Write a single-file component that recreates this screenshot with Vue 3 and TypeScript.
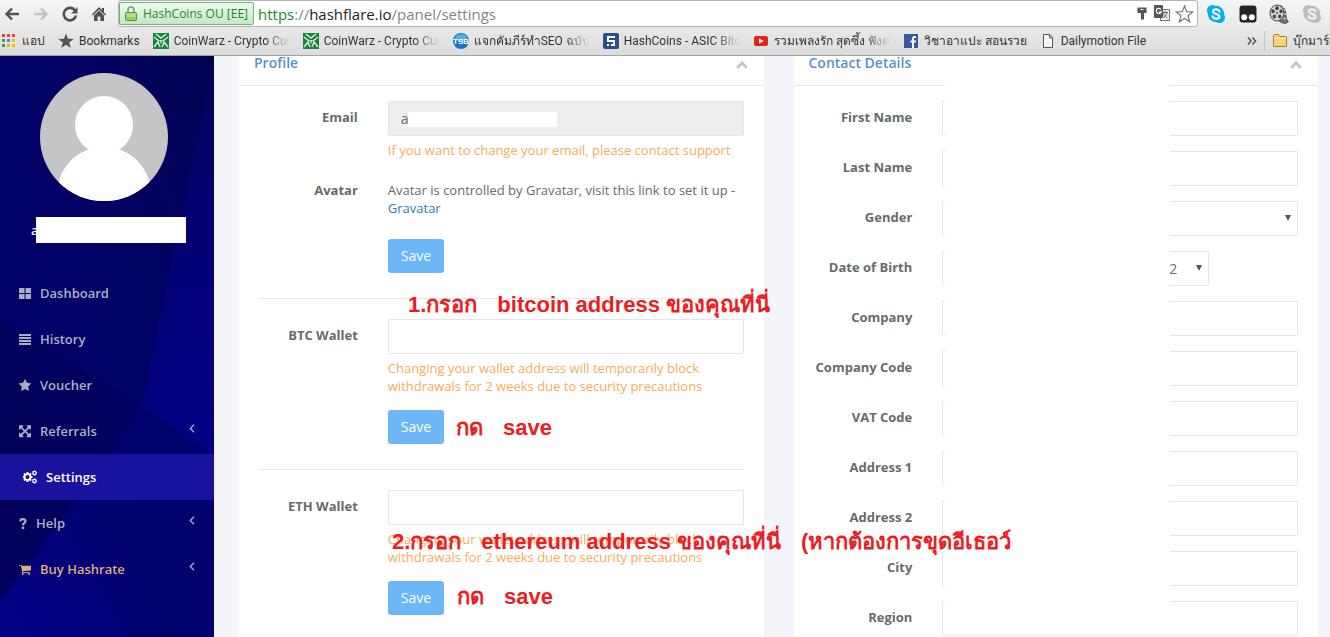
<script setup lang="ts">
import { ref } from 'vue'

interface Bookmark {
  label: string
  icon: string
  wide?: boolean
}

interface NavItem {
  label: string
  icon: string
  expandable?: boolean
  active?: boolean
  accent?: boolean
}

interface ContactField {
  id: string
  label: string
  kind: 'text' | 'select' | 'date'
}

const bookmarks: Bookmark[] = [
  { label: 'แอป', icon: 'apps' },
  { label: 'Bookmarks', icon: 'star' },
  { label: 'CoinWarz - Crypto Cur', icon: 'warz', wide: true },
  { label: 'CoinWarz - Crypto Cur', icon: 'warz', wide: true },
  { label: 'แจกคัมภีร์ทำSEO ฉบับเซี', icon: 'tsb', wide: true },
  { label: 'HashCoins - ASIC Bitco', icon: 'hashcoins', wide: true },
  { label: 'รวมเพลงรัก สุดซึ้ง ฟังต่อเนื่อง', icon: 'youtube', wide: true },
  { label: 'วิชาอาแปะ สอนรวย', icon: 'facebook' },
  { label: 'Dailymotion File', icon: 'file' },
]

const navItems: NavItem[] = [
  { label: 'Dashboard', icon: 'grid' },
  { label: 'History', icon: 'bars' },
  { label: 'Voucher', icon: 'star' },
  { label: 'Referrals', icon: 'arrows', expandable: true },
  { label: 'Settings', icon: 'cogs', active: true },
  { label: 'Help', icon: 'question', expandable: true },
  { label: 'Buy Hashrate', icon: 'cart', expandable: true, accent: true },
]

const contactFields: ContactField[] = [
  { id: 'first-name', label: 'First Name', kind: 'text' },
  { id: 'last-name', label: 'Last Name', kind: 'text' },
  { id: 'gender', label: 'Gender', kind: 'select' },
  { id: 'birth-year', label: 'Date of Birth', kind: 'date' },
  { id: 'company', label: 'Company', kind: 'text' },
  { id: 'company-code', label: 'Company Code', kind: 'text' },
  { id: 'vat-code', label: 'VAT Code', kind: 'text' },
  { id: 'address-1', label: 'Address 1', kind: 'text' },
  { id: 'address-2', label: 'Address 2', kind: 'text' },
  { id: 'city', label: 'City', kind: 'text' },
  { id: 'region', label: 'Region', kind: 'text' },
]

const wallets = [
  { id: 'btc', label: 'BTC Wallet' },
  { id: 'eth', label: 'ETH Wallet' },
]

const email = ref('a')
const addresses = ref<Record<string, string>>({ btc: '', eth: '' })
</script>

<template>
  <div class="window">
    <header class="browser">
      <div class="toolbar">
        <div class="controls">
          <button type="button" class="tool" aria-label="Back">
            <svg width="16" height="14" viewBox="0 0 16 14"><path d="M15 7H3M8 1.500 2.500 7 8 12.500" fill="none" stroke="#505050" stroke-width="2.400" /></svg>
          </button>
          <button type="button" class="tool" aria-label="Forward">
            <svg width="16" height="14" viewBox="0 0 16 14"><path d="M1 7h12M8 1.500 13.500 7 8 12.500" fill="none" stroke="#c4c4c4" stroke-width="2.400" /></svg>
          </button>
          <button type="button" class="tool" aria-label="Reload">
            <svg width="16" height="16" viewBox="0 0 16 16"><path d="M13 4.500A6.200 6.200 0 1 0 14 9.500" fill="none" stroke="#505050" stroke-width="2.600" /><path d="M15.500 1v6.500H9z" fill="#505050" /></svg>
          </button>
          <button type="button" class="tool" aria-label="Home">
            <svg width="16" height="16" viewBox="0 0 16 16"><path d="M8 1 .8 8.500l1.100 1L8 3.400l6.100 6.100 1.100-1-2.200-2.300V2h-2v2.100z" fill="#505050" /><path d="M8 4.600 3 9.600V15h3.600v-4.500h2.800V15H13V9.600z" fill="#505050" /></svg>
          </button>
        </div>
        <div class="omnibox">
          <button type="button" class="identity">
            <svg width="12" height="15" viewBox="0 0 12 15"><path d="M3 7V4a3 3 0 0 1 6 0v3" fill="none" stroke="#8c9484" stroke-width="1.600" /><rect x=".5" y="6.500" width="11" height="8" rx="1" fill="#8ed35c" stroke="#559438" /><path d="M1.500 8h9M1.500 10h9" stroke="#c9f0a7" /></svg>
            HashCoins OU [EE]
          </button>
          <div class="address"><span class="scheme">https</span><span class="path">://</span>hashflare.io<span class="path">/panel/settings</span></div>
          <div class="omni-icons">
            <svg width="12" height="16" viewBox="0 0 12 16"><path d="M1.500 1.500h9v5.500h-2.500v6.500H5V7H1.500z" fill="#555" /><path d="M4.500 3.500h3" stroke="#fff" /></svg>
            <svg width="17" height="17" viewBox="0 0 17 17"><rect x="7.500" y="4.500" width="9" height="11" fill="#eee" stroke="#777" /><path d="M9 7.500h6M12 6v1.500M14 8c-1 3-2.500 4-4 5M10 8c1 2 2.500 3.500 4.500 5" fill="none" stroke="#666" /><rect x="1" y="0" width="9" height="13" rx="1" fill="#555" /><path d="M8 4.500A2.600 2.600 0 1 0 8.200 7H6" fill="none" stroke="#fff" stroke-width="1.300" /></svg>
            <svg width="19" height="18" viewBox="0 0 19 18"><path d="m9.500 1 2.200 5.700 6.100.3-4.800 3.800 1.700 6-5.200-3.400L4.300 16.800l1.700-6L1.200 7l6.100-.3z" fill="#fff" stroke="#777" stroke-width="1.200" /></svg>
          </div>
        </div>
        <div class="extensions">
          <button type="button" class="tool" aria-label="Skype">
            <svg width="20" height="20" viewBox="0 0 20 20"><circle cx="6.500" cy="6.500" r="5.500" fill="#00aff0" /><circle cx="13.500" cy="13.500" r="5.500" fill="#00aff0" /><circle cx="10" cy="10" r="8.200" fill="#00aff0" /><path d="M13.500 7.300C12.500 4.600 7 4.800 7 7.500c0 3 6.500 1.800 6.500 5 0 2.800-6 2.900-7.100-.1" fill="none" stroke="#fff" stroke-width="2.100" stroke-linecap="round" /></svg>
          </button>
          <button type="button" class="tool" aria-label="User scripts">
            <svg width="18" height="18" viewBox="0 0 18 18"><rect x=".5" y=".5" width="17" height="17" rx="3" fill="#242424" /><circle cx="5.200" cy="12.300" r="3" fill="#fff" /><circle cx="12.800" cy="12.300" r="3" fill="#fff" /></svg>
          </button>
          <button type="button" class="tool" aria-label="Video">
            <svg width="20" height="20" viewBox="0 0 20 20"><path d="M9 1.500c6 0 8 5 8 10 0 3 .5 4.500 2.500 6l-3 2C14 19 11 18.500 9 16z" fill="#777" stroke="#444" /><path d="M12 3l3 1M14 6l2.500.5M15 10h2.500M14 14l3 1" stroke="#ddd" stroke-width="1.300" /><ellipse cx="8" cy="9" rx="7" ry="8" fill="#d8d8d8" stroke="#444" /><g fill="#444"><ellipse cx="8" cy="4.300" rx="1.800" ry="2" /><ellipse cx="4" cy="7.300" rx="1.600" ry="2" /><ellipse cx="12" cy="7.300" rx="1.600" ry="2" /><ellipse cx="5.300" cy="12.600" rx="1.700" ry="2" /><ellipse cx="10.700" cy="12.600" rx="1.700" ry="2" /><circle cx="8" cy="9" r="1" /></g></svg>
          </button>
          <button type="button" class="tool" aria-label="Skype offline">
            <svg width="20" height="20" viewBox="0 0 20 20"><circle cx="6.500" cy="6.500" r="5.500" fill="#bdbdbd" /><circle cx="13.500" cy="13.500" r="5.500" fill="#bdbdbd" /><circle cx="10" cy="10" r="8.200" fill="#bdbdbd" /><path d="M13.500 7.300C12.500 4.600 7 4.800 7 7.500c0 3 6.500 1.800 6.500 5 0 2.800-6 2.900-7.100-.1" fill="none" stroke="#f4f4f4" stroke-width="2.100" stroke-linecap="round" /></svg>
          </button>
        </div>
      </div>

      <nav class="bookmarks" aria-label="Bookmarks">
        <a v-for="(b, i) in bookmarks" :key="i" href="#" class="bookmark">
          <svg width="16" height="16" viewBox="0 0 16 16" aria-hidden="true">
            <template v-if="b.icon === 'apps'">
              <path d="M1 1h3v3H1zM6 1h3v3H6zM11 1h3v3h-3z" fill="#ea4335" />
              <path d="M1 6h3v3H1z" fill="#34a853" /><path d="M6 6h3v3H6z" fill="#4285f4" /><path d="M11 6h3v3h-3z" fill="#fbbc05" />
              <path d="M1 11h3v3H1z" fill="#34a853" /><path d="M6 11h3v3H6zM11 11h3v3h-3z" fill="#fbbc05" />
            </template>
            <path v-else-if="b.icon === 'star'" d="m8 .5 2 5.300 5.700.2-4.500 3.500 1.600 5.500L8 11.800 3.200 15l1.600-5.500L.3 6 6 5.800z" fill="#555" />
            <template v-else-if="b.icon === 'warz'">
              <rect width="16" height="16" fill="#1d8240" />
              <path d="M3 1l5 4 5-4M1 4l5 4M15 4l-5 4M1 14l4-5 2 5M15 14l-4-5-2 5" fill="none" stroke="#d9efdc" stroke-width="1.400" />
              <path d="M6 7h4l-2 4z" fill="#b4e0bd" />
            </template>
            <template v-else-if="b.icon === 'tsb'">
              <circle cx="8" cy="8" r="8" fill="#1b73c5" /><ellipse cx="8" cy="5" rx="6" ry="4" fill="#5aa9e8" />
              <text x="8" y="11" text-anchor="middle" font-size="8" font-weight="700" font-family="Liberation Sans, sans-serif" fill="#fff">TSB</text>
            </template>
            <template v-else-if="b.icon === 'hashcoins'">
              <rect width="16" height="16" rx="2" fill="#2b4e86" />
              <path d="M12 4H5v4h6v4H8M4 12h2" fill="none" stroke="#fff" stroke-width="2" />
            </template>
            <template v-else-if="b.icon === 'youtube'">
              <rect x="1" y="3" width="14" height="10" rx="2" fill="#e62117" /><path d="m6 5.500 5 2.500-5 2.500z" fill="#fff" />
            </template>
            <template v-else-if="b.icon === 'facebook'">
              <rect x="1" y="1" width="14" height="14" fill="#3b5998" /><path d="M13 4h-1.500c-1.200 0-1.500.7-1.500 1.500V15M7.500 8.500H13" fill="none" stroke="#fff" stroke-width="2" />
            </template>
            <path v-else d="M3.500 1.500h6l3 3v10h-9zM9.500 1.500v3.500h3" fill="#f7f7f7" stroke="#555" />
          </svg>
          <span class="bookmark-text" :class="{ wide: b.wide }">{{ b.label }}</span>
        </a>
        <button type="button" class="more" aria-label="More bookmarks">
          <svg width="10" height="8" viewBox="0 0 10 8"><path d="m1 .5 3 3.500-3 3.500M5.500.5l3 3.500-3 3.500" fill="none" stroke="#555" stroke-width="1.600" /></svg>
        </button>
        <a href="#" class="bookmark other">
          <svg width="16" height="16" viewBox="0 0 16 16" aria-hidden="true"><path d="M1.500 13.500v-11l1-1h4l1.500 2h6l.5.5v9.500z" fill="#f9d27b" stroke="#a97f35" /><path d="M2 5.500h12" stroke="#fff0c2" /></svg>
          <span class="bookmark-text">บุ๊กมาร์กอื่นๆ</span>
        </a>
      </nav>
    </header>

    <div class="page">
      <aside class="sidebar">
        <svg class="facets" viewBox="0 0 214 581" preserveAspectRatio="none" aria-hidden="true">
          <defs>
            <linearGradient id="shade-top" x1="1" y1="0" x2=".3" y2=".6"><stop offset="0" stop-color="#000450" /><stop offset=".5" stop-color="#010262" /><stop offset="1" stop-color="#02016a" /></linearGradient>
            <linearGradient id="shade-right" x1="0" y1="0" x2="0" y2="1"><stop offset="0" stop-color="#000458" /><stop offset=".4" stop-color="#030072" /><stop offset="1" stop-color="#040084" /></linearGradient>
            <linearGradient id="shade-left" x1="0" y1="0" x2="1" y2="0"><stop offset="0" stop-color="#02005a" /><stop offset="1" stop-color="#020062" /></linearGradient>
            <linearGradient id="shade-low" x1="0" y1="1" x2="1" y2=".4"><stop offset="0" stop-color="#050088" /><stop offset=".6" stop-color="#030070" /><stop offset="1" stop-color="#02006a" /></linearGradient>
          </defs>
          <rect width="214" height="581" fill="url(#shade-top)" />
          <path d="M214 0 173 200 142 350 214 400z" fill="url(#shade-right)" />
          <path d="M0 261 142 350 112 400 0 545z" fill="url(#shade-left)" />
          <path d="M142 350 214 400V581H0v-36l112-145z" fill="url(#shade-low)" />
        </svg>
        <div class="account">
          <svg class="avatar" viewBox="0 0 128 128" role="img" aria-label="Avatar">
            <defs><clipPath id="round"><circle cx="64" cy="64" r="64" /></clipPath></defs>
            <g clip-path="url(#round)"><rect width="128" height="128" fill="#c5c5c5" /><circle cx="64" cy="52" r="29" fill="#fff" /><circle cx="64" cy="121" r="47" fill="#fff" /></g>
          </svg>
          <div class="account-name"><span>a</span><span class="name-cover"></span></div>
        </div>
        <nav class="menu" aria-label="Main">
          <a v-for="item in navItems" :key="item.label" href="#" class="menu-item" :class="{ active: item.active, accent: item.accent }">
            <svg v-if="item.icon === 'grid'" width="12" height="13" viewBox="0 0 12 13"><path d="M0 1h5.500v5H0zM6.500 1h5.500v5H6.500zM0 7h5.500v5H0zM6.500 7h5.500v5H6.500z" fill="currentColor" /></svg>
            <svg v-else-if="item.icon === 'bars'" width="12" height="13" viewBox="0 0 12 13"><path d="M0 2h12M0 5h12M0 8h12M0 11h12" stroke="currentColor" stroke-width="2" /></svg>
            <svg v-else-if="item.icon === 'star'" width="12" height="13" viewBox="64 64 1664 1664"><path fill="currentColor" d="M1728 647q0 22-26 48l-363 354 86 500q1 7 1 20 0 21-10.500 35.500t-30.500 14.500q-19 0-40-12l-449-236-449 236q-22 12-40 12-21 0-31.500-14.500t-10.500-35.500q0-6 2-20l86-500-364-354q-25-27-25-48 0-37 56-46l502-73 225-455q19-41 49-41t49 41l225 455 502 73q56 9 56 46z" /></svg>
            <svg v-else-if="item.icon === 'arrows'" width="12" height="13" viewBox="128 100 1536 1664"><path fill="currentColor" d="M1411 541l-355 355 355 355 144-144q29-31 70-14 39 17 39 59v448q0 26-19 45t-45 19h-448q-42 0-59-40-17-39 14-69l144-144-355-355-355 355 144 144q31 30 14 69-17 40-59 40h-448q-26 0-45-19t-19-45v-448q0-42 40-59 39-17 69 14l144 144 355-355-355-355-144 144q-19 19-45 19-12 0-24-5-40-17-40-59v-448q0-26 19-45t45-19h448q42 0 59 40 17 39-14 69l-144 144 355 355 355-355-144-144q-31-30-14-69 17-40 59-40h448q26 0 45 19t19 45v448q0 42-39 59-13 5-25 5-26 0-45-19z" /></svg>
            <svg v-else-if="item.icon === 'cogs'" width="14" height="14" viewBox="0 0 1792 1792">
              <path fill="currentColor" fill-rule="evenodd" d="M832 896q0-106-75-181t-181-75-181 75-75 181 75 181 181 75 181-75 75-181zm384-91v185q0 10-7 19.500t-16 10.500l-155 24q-11 35-32 76 34 48 90 115 7 11 7 20 0 12-7 19-23 30-82.500 89.500t-78.500 59.500q-11 0-21-7l-115-90q-37 19-77 31-11 108-23 155-7 24-30 24h-186q-11 0-20-7.500t-10-17.500l-23-153q-34-10-75-31l-118 89q-7 7-20 7-11 0-21-8-144-133-144-160 0-9 7-19 10-14 41-53t47-61q-23-44-35-82l-152-24q-10-1-17-9.500t-7-19.500v-185q0-10 7-19.500t16-10.500l155-24q11-35 32-76-34-48-90-115-7-11-7-20 0-12 7-20 22-30 82-89t79-59q11 0 21 7l115 90q34-18 77-32 11-108 23-154 7-24 30-24h186q11 0 20 7.500t10 17.500l23 153q34 10 75 31l118-89q8-7 20-7 11 0 21 8 144 133 144 160 0 8-7 19-12 16-42 54t-45 60q23 48 34 82l152 23q10 2 17 10.500t7 19.500z" />
              <g fill="none" stroke="currentColor"><g stroke-width="150"><circle cx="1472" cy="384" r="205" /><circle cx="1472" cy="1408" r="205" /></g><g stroke-width="110" stroke-dasharray="150 158"><circle cx="1472" cy="384" r="294" /><circle cx="1472" cy="1408" r="294" /></g></g>
            </svg>
            <svg v-else-if="item.icon === 'question'" width="8" height="13" viewBox="0 0 8 13"><path d="M1.200 4.300C1.500 1.500 6.500 1.500 6.500 4.200 6.500 6 4 6 4 8.400" fill="none" stroke="currentColor" stroke-width="2.200" /><path d="M2.800 9.600h2.400V12H2.800z" fill="currentColor" /></svg>
            <svg v-else width="12" height="13" viewBox="64 64 1664 1664"><path fill="currentColor" d="M704 1536q0 52-38 90t-90 38-90-38-38-90 38-90 90-38 90 38 38 90zm896 0q0 52-38 90t-90 38-90-38-38-90 38-90 90-38 90 38 38 90zm128-1088v512q0 24-16.500 42.500t-40.500 21.500l-1044 122q13 60 13 70 0 16-24 64h920q26 0 45 19t19 45-19 45-45 19h-1024q-26 0-45-19t-19-45q0-11 8-31.500t16-36 21.500-40 15.500-29.500l-177-823h-204q-26 0-45-19t-19-45 19-45 45-19h256q16 0 28.500 6.500t19.500 15.500 13 24.500 8 26 5.500 29.500 4.500 26h1201q26 0 45 19t19 45z" /></svg>
            <span>{{ item.label }}</span>
            <svg v-if="item.expandable" class="caret" width="6" height="9" viewBox="0 0 6 9"><path d="M5 .8 1.300 4.500 5 8.200" fill="none" stroke="currentColor" stroke-width="1.300" /></svg>
          </a>
        </nav>
      </aside>

      <main class="content">
        <section class="card">
          <header class="card-head">
            <h2>Profile</h2>
            <button type="button" class="collapse" aria-label="Collapse Profile"><svg width="12" height="8" viewBox="0 0 12 8"><path d="m1.200 6.700 4.800-4.800 4.800 4.800" fill="none" stroke="#c4c4c4" stroke-width="2.800" /></svg></button>
          </header>
          <div class="card-body">
            <form class="form" @submit.prevent>
              <div class="row">
                <label for="email">Email</label>
                <div class="field">
                  <div class="covered">
                    <input id="email" v-model="email" class="control" type="text" disabled />
                    <span class="email-cover"></span>
                  </div>
                  <p class="hint">If you want to change your email, please contact support</p>
                </div>
              </div>
              <div class="row">
                <span class="label">Avatar</span>
                <p class="static">Avatar is controlled by Gravatar, visit this link to set it up - <a href="#">Gravatar</a></p>
              </div>
              <div class="row"><button class="save" type="submit">Save</button></div>
            </form>
            <form v-for="w in wallets" :key="w.id" class="form divided" @submit.prevent>
              <div class="row">
                <label :for="w.id">{{ w.label }}</label>
                <div class="field">
                  <input :id="w.id" v-model="addresses[w.id]" class="control" type="text" />
                  <p class="hint">Changing your wallet address will temporarily block withdrawals for 2 weeks due to security precautions</p>
                </div>
              </div>
              <div class="row"><button class="save" type="submit">Save</button></div>
            </form>
          </div>
        </section>

        <section class="card">
          <header class="card-head">
            <h2>Contact Details</h2>
            <button type="button" class="collapse" aria-label="Collapse Contact Details"><svg width="12" height="8" viewBox="0 0 12 8"><path d="m1.200 6.700 4.800-4.800 4.800 4.800" fill="none" stroke="#c4c4c4" stroke-width="2.800" /></svg></button>
          </header>
          <div class="card-body">
            <form class="form" @submit.prevent>
              <div v-for="f in contactFields" :key="f.id" class="row">
                <label :for="f.id">{{ f.label }}</label>
                <input v-if="f.kind === 'text'" :id="f.id" class="control" type="text" />
                <div v-else-if="f.kind === 'select'" class="picker">
                  <select :id="f.id" class="control"><option></option></select>
                </div>
                <div v-else class="dates">
                  <div class="picker"><select class="control" aria-label="Day"><option></option></select></div>
                  <div class="picker"><select class="control" aria-label="Month"><option></option></select></div>
                  <div class="picker year"><select :id="f.id" class="control"><option>2</option></select></div>
                </div>
              </div>
            </form>
          </div>
          <div class="details-cover"></div>
        </section>

        <p class="note note-btc"><span>1.กรอก</span><span class="lead">bitcoin address</span><span>ของคุณที่นี่</span></p>
        <p class="note note-btc-save"><span>กด</span><span class="lead">save</span></p>
        <p class="note note-eth"><span>2.กรอก</span><span class="lead">ethereum address</span><span>ของคุณที่นี่</span><span class="lead">(หากต้องการขุดอีเธอว์</span></p>
        <p class="note note-eth-save"><span>กด</span><span class="lead">save</span></p>
      </main>
    </div>
  </div>
</template>

<style>
body {
  margin: 0;
  overflow: hidden;
}
</style>

<style scoped>
.window,
.window * {
  box-sizing: border-box;
}

.window {
  display: flex;
  flex-direction: column;
  height: 100vh;
  overflow: hidden;
  background: #f3f5fa;
  color: #676a6c;
  font-family: 'Open Sans', 'Noto Sans', sans-serif;
  font-size: 13px;
  line-height: 18px;
}

p,
h2 {
  margin: 0;
}

a {
  text-decoration: none;
}

svg {
  display: block;
  flex: none;
}

button,
input,
select {
  font: inherit;
}

.browser {
  flex: none;
  border-bottom: 1px solid #a3a3a3;
  background: linear-gradient(#f6f6f6, #dcdcdc);
  color: #333;
}

.toolbar {
  display: flex;
  align-items: center;
  height: 27px;
  padding-right: 8px;
}

.controls {
  display: flex;
  gap: 13px;
  width: 118px;
  padding-left: 4px;
}

.tool,
.more,
.collapse {
  display: flex;
  align-items: center;
  padding: 0;
  border: 0;
  background: none;
}

.omnibox {
  display: flex;
  flex: 1;
  align-items: center;
  height: 27px;
  border: 1px solid #b4b4b4;
  border-radius: 3px;
  background: #fff;
}

.identity {
  display: flex;
  flex: none;
  align-items: center;
  gap: 6px;
  height: 23px;
  padding: 0 5px;
  border: 1px solid #6db86d;
  border-radius: 2px;
  background: linear-gradient(#eefaee, #c4e8c4);
  color: #1b8a1b;
  font-size: 12px;
  white-space: nowrap;
}

.address {
  flex: 1;
  padding-left: 4px;
  color: #222;
  font-size: 15px;
}

.scheme {
  color: #1b8a1b;
}

.path {
  color: #858585;
}

.omni-icons {
  display: flex;
  align-items: center;
  gap: 5px;
  padding-right: 3px;
}

.extensions {
  display: flex;
  justify-content: space-between;
  width: 116px;
  margin-left: 8px;
}

.bookmarks {
  display: flex;
  align-items: center;
  gap: 13px;
  height: 28px;
  padding-left: 1px;
  overflow: hidden;
}

.bookmark {
  display: flex;
  flex: none;
  align-items: center;
  gap: 5px;
  color: #333;
  font-family: Roboto, 'Open Sans', sans-serif;
  font-size: 12px;
  white-space: nowrap;
}

.bookmark-text.wide {
  width: 116px;
  overflow: hidden;
  mask-image: linear-gradient(90deg, #000 90px, transparent);
}

.more {
  margin-left: auto;
}

.other {
  width: 66px;
  height: 20px;
  margin-left: -6px;
  padding-left: 7px;
  border-left: 1px solid #c0cad4;
}

.page {
  display: flex;
  flex: 1;
  min-height: 0;
}

.sidebar {
  position: relative;
  flex: none;
  width: 214px;
  overflow: hidden;
}

.facets {
  position: absolute;
  inset: 0;
  width: 100%;
  height: 100%;
}

.account {
  position: relative;
  padding: 17px 28px 27px 31px;
  color: #fff;
  font-weight: 600;
}

.avatar {
  width: 128px;
  height: 128px;
  margin: 0 0 16px 9px;
}

.account-name {
  display: flex;
  align-items: center;
  height: 26px;
}

.account-name > span:first-child {
  width: 5px;
}

.name-cover {
  position: relative;
  flex: 1;
  height: 26px;
  background: #fff;
}

.menu {
  position: relative;
}

.menu-item {
  display: flex;
  align-items: center;
  gap: 9px;
  height: 46px;
  padding: 0 19px;
  color: #a7b1c2;
  font-weight: 600;
}

.menu-item.active {
  padding-left: 23px;
  background: #19129e;
  color: #fff;
}

.menu-item.accent {
  color: #d9ae78;
}

.caret {
  margin-left: auto;
  margin-bottom: 5px;
  color: #a7b1c2;
}

.content {
  position: relative;
  display: grid;
  flex: 1;
  grid-template-columns: 1fr 1fr;
  gap: 30px;
  min-width: 0;
  padding: 0 12px 0 25px;
}

.card {
  position: relative;
  min-width: 0;
  background: #fff;
}

.card-head {
  display: flex;
  align-items: flex-start;
  justify-content: space-between;
  height: 30px;
  padding: 0 16px 0 15px;
  border-bottom: 1px solid #e7eaec;
}

h2 {
  color: #5b8fc7;
  font-size: 14px;
  font-weight: 600;
  line-height: 14px;
}

.collapse {
  padding-top: 5px;
}

.card-body {
  padding: 15px 20px;
}

.form {
  display: grid;
  gap: 15px;
}

.divided {
  margin-top: 25px;
  padding-top: 20px;
  border-top: 1px solid #e7eaec;
}

.row {
  display: grid;
  grid-template-columns: 10fr 36fr;
  column-gap: 30px;
}

label,
.label {
  padding-top: 7px;
  font-weight: 700;
  text-align: right;
}

.control {
  display: block;
  width: 100%;
  height: 35px;
  padding: 6px 12px;
  border: 1px solid #e5e6e7;
  border-radius: 1px;
  background: #fff;
  color: #676a6c;
  font-size: 14px;
  appearance: none;
}

.control:disabled {
  background: #eee;
}

.covered,
.picker {
  position: relative;
}

.email-cover {
  position: absolute;
  top: 11px;
  left: 20px;
  width: 149px;
  height: 15px;
  background: #fff;
}

.hint {
  margin-top: 5px;
  color: #f8ac59;
}

.static {
  padding: 7px 0;
}

.static a {
  color: #337ab7;
}

.save {
  grid-column: 2;
  justify-self: start;
  height: 34px;
  padding: 0 13px;
  border: 0;
  border-radius: 3px;
  background: #6cb7f7;
  color: #fff;
  font-size: 14px;
}

.picker::after {
  position: absolute;
  top: 14px;
  right: 7px;
  border: 3px solid transparent;
  border-top: 6px solid #555;
  border-bottom: 0;
  content: '';
}

.dates {
  display: grid;
  grid-template-columns: 1fr 1fr 1fr;
  gap: 6px;
  width: 75%;
}

.year .control {
  padding-right: 0;
  padding-left: 44px;
}

.details-cover {
  position: absolute;
  top: 29px;
  left: 151px;
  width: 225px;
  height: 549px;
  background: #fff;
}

.note {
  position: absolute;
  display: flex;
  gap: 6px;
  color: #ed1c24;
  font-family: 'Liberation Sans', 'Noto Sans', sans-serif;
  font-size: 22px;
  font-weight: 700;
  line-height: 26px;
  white-space: nowrap;
}

.lead {
  margin-left: 14px;
}

.note-btc {
  top: 236px;
  left: 194px;
}

.note-btc-save {
  top: 359px;
  left: 242px;
}

.note-eth {
  top: 473px;
  left: 178px;
}

.note-eth-save {
  top: 528px;
  left: 243px;
}
</style>
